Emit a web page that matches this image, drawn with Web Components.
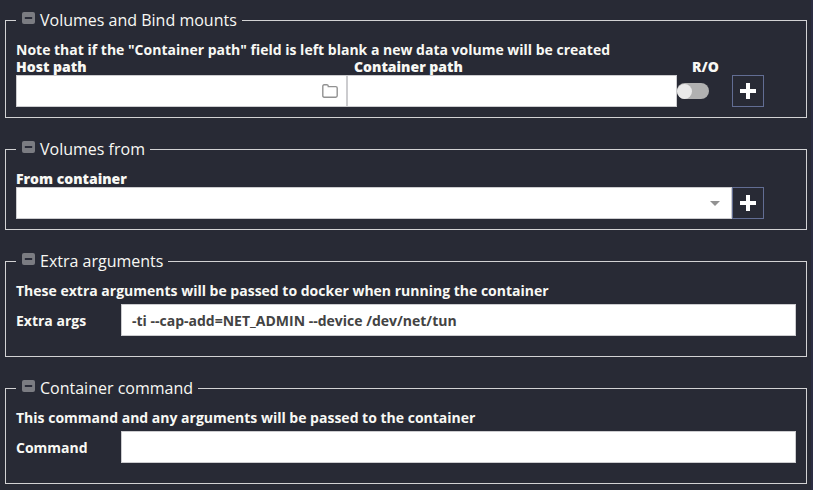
<!DOCTYPE html>
<html lang="en"><head><meta charset="utf-8"><title>Container settings</title>
<style>
html,body{margin:0;height:100%}
body{background:#282a35;color:#f8f8f4;font:700 14px/17px "Open Sans",sans-serif;box-sizing:border-box;overflow:hidden;border-right:2px solid #2b2d42}
</style></head><body>
<docker-form></docker-form>
<script>
const define=(name,html)=>customElements.define(name,class extends HTMLElement{
  constructor(){super();this.attachShadow({mode:'open'}).innerHTML=html;}
});
define('option-group',`<style>
:host{display:block}
fieldset{box-sizing:border-box;height:var(--h);margin:0;min-width:0;border:1px solid #d2d2d4;padding:0 10px}
legend{height:23px;padding:0 5px 0 6px;display:flex;align-items:flex-start;font-weight:400;font-size:16px;line-height:22px}
svg{width:13px;height:12px;margin:3px 5px 0 0;flex:none}
</style><fieldset><legend><svg viewBox="0 0 13 12"><rect width="13" height="12" rx="2" fill="#7b7c82"/><rect x="2.8" y="5" width="7.4" height="2" rx=".5" fill="#292b38"/></svg><span><slot name="title"></slot></span></legend><slot></slot></fieldset>`);
define('text-field',`<style>
:host{display:flex;box-sizing:border-box;height:32px;background:#fff;border:1px solid #cccccf;color:#434343;align-items:center;padding:0 10px;position:relative;min-width:0}
.end{margin-left:auto;display:flex}
</style><slot></slot><span class="end"><slot name="icon"></slot></span>`);
define('toggle-switch',`<style>
:host{display:flex;align-items:center;box-sizing:border-box;width:32px;height:16px;border-radius:8px;background:#b1b1b1}
i{width:15px;height:15px;border-radius:50%;background:#e9e9e9}
</style><i></i>`);
define('add-button',`<style>
:host{display:grid;place-items:center;box-sizing:border-box;width:32px;height:32px;border:1px solid #626d93}
svg{width:16px;height:16px;display:block}
</style><svg viewBox="0 0 16 16"><path d="M6 0h4v6h6v4h-6v6H6v-6H0V6h6z" fill="#fff"/></svg>`);
define('folder-icon',`<style>:host,svg{display:block}</style><svg width="16" height="14" viewBox="0 0 16 14" fill="none" stroke="#929292" stroke-width="1.4"><path d="M.8 2.2Q.8.8 2.2.8H5Q6.3.8 6.3 2.6H13.7Q15.2 2.6 15.2 4V11.8Q15.2 13.2 13.7 13.2H2.2Q.8 13.2.8 11.8Z"/></svg>`);
define('caret-icon',`<style>:host,svg{display:block}</style><svg width="10" height="5" viewBox="0 0 10 5"><path d="M0 0h10L5 5z" fill="#929292"/></svg>`);
define('docker-form',`<style>
:host{display:grid;gap:20px;width:802px;padding:9px 0 0 5px}
.note{padding-top:9px}
.labels{font-weight:800;display:grid;grid-template-columns:338px 338px auto;height:17px}
.row{display:flex;align-items:center}
toggle-switch{margin-right:23px}
.arg{display:grid;grid-template-columns:105px 1fr;align-items:center;margin-top:5px}
.from{font-weight:800;padding-top:9px}
.wide{flex:0 0 716px}.path{flex:0 0 331px}.path+.path{flex-basis:330px}
.path folder-icon{margin-right:-2px}
.wide caret-icon{margin-right:1px}
</style>
<option-group style="--h:109px"><span slot="title">Volumes and Bind mounts</span>
<div class="note">Note that if the "Container path" field is left blank a new data volume will be created</div>
<div class="labels"><span>Host path</span><span>Container path</span><span>R/O</span></div>
<div class="row"><text-field class="path"><folder-icon slot="icon"></folder-icon></text-field><text-field class="path"></text-field><toggle-switch></toggle-switch><add-button></add-button></div></option-group>
<option-group style="--h:92px"><span slot="title">Volumes from</span>
<div class="from">From container</div>
<div class="row"><text-field class="wide"><caret-icon slot="icon"></caret-icon></text-field><add-button></add-button></div></option-group>
<option-group style="--h:107px"><span slot="title">Extra arguments</span>
<div class="note">These extra arguments will be passed to docker when running the container</div>
<div class="arg"><span>Extra args</span><text-field>-ti --cap-add=NET_ADMIN --device /dev/net/tun</text-field></div></option-group>
<option-group style="--h:107px"><span slot="title">Container command</span>
<div class="note">This command and any arguments will be passed to the container</div>
<div class="arg"><span>Command</span><text-field></text-field></div></option-group>`);
</script></body></html>
